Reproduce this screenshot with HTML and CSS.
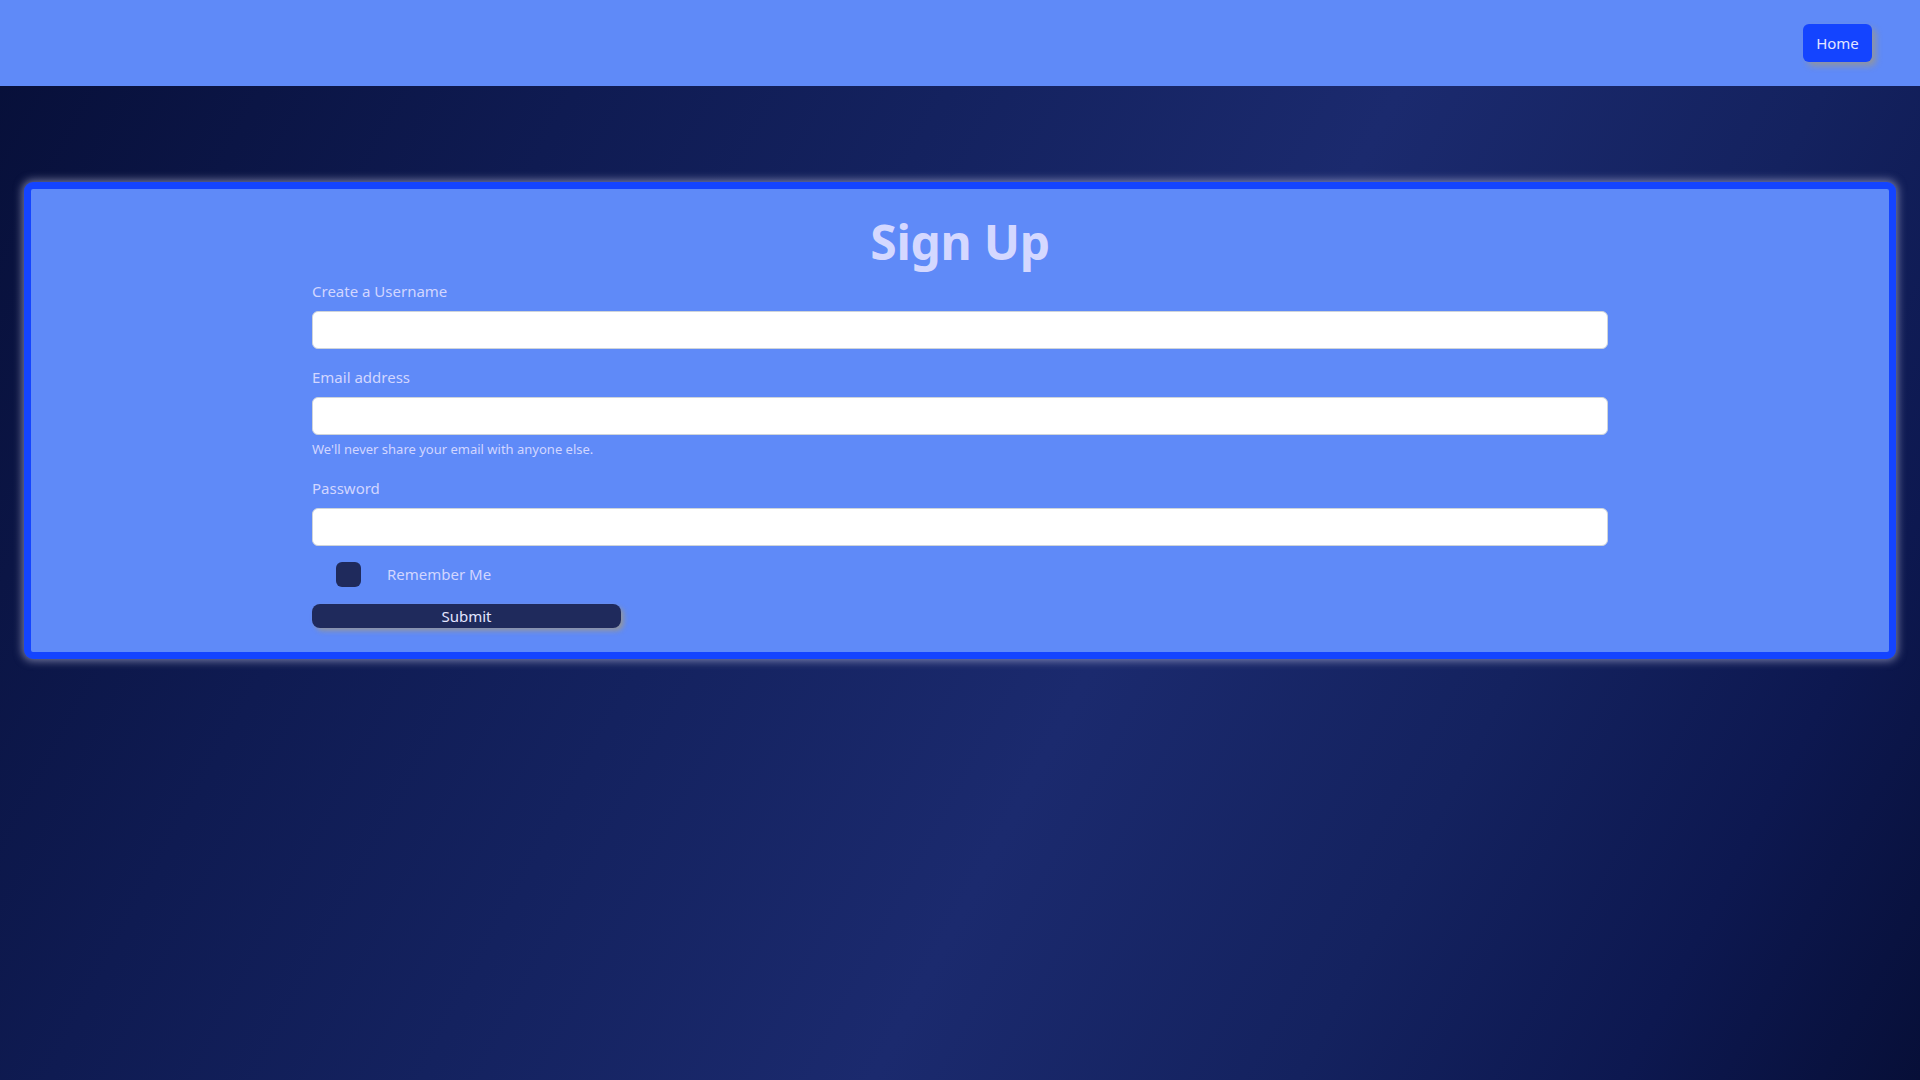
FILE: index.html
```html
<!DOCTYPE html>
<html lang="en">
<head>
<meta charset="utf-8">
<title>Sign Up</title>
<link rel="stylesheet" href="styles.css">
</head>
<body>
<nav class="navbar">
  <a class="home-btn" href="#">Home</a>
</nav>
<main class="page">
  <section class="card">
    <div class="container">
      <h1 class="title">Sign Up</h1>
      <form class="form">
        <div class="field">
          <label class="label" for="username">Create a Username</label>
          <input class="control" type="text" id="username">
        </div>
        <div class="field">
          <label class="label" for="email">Email address</label>
          <input class="control" type="email" id="email">
          <div class="help">We'll never share your email with anyone else.</div>
        </div>
        <div class="field">
          <label class="label" for="password">Password</label>
          <input class="control" type="password" id="password">
        </div>
        <div class="check-row">
          <span class="check-box"></span>
          <span class="check-label">Remember Me</span>
        </div>
        <button class="submit" type="button">Submit</button>
      </form>
    </div>
  </section>
</main>
</body>
</html>
```
FILE: styles.css
```css
* { box-sizing: border-box; }
html, body { height: 100%; }
body {
  margin: 0;
  font-family: "Noto Sans", "Open Sans", sans-serif;
  font-size: 15px;
  line-height: 1.5;
  background: linear-gradient(118deg, #070f38 0%, #0f1b52 25%, #14225f 40%, #1b2a6e 58%, #14225f 75%, #0d1850 88%, #070f38 100%) fixed;
  color: #d2d6ff;
}
.navbar {
  height: 86px;
  background: #5f8af8;
  display: flex;
  justify-content: flex-end;
  align-items: center;
  padding: 0 48px 0 0;
}
.home-btn {
  display: inline-flex;
  align-items: center;
  justify-content: center;
  width: 69px;
  height: 38px;
  background: #1444ff;
  color: #e4e6ff;
  text-decoration: none;
  border-radius: 6px;
  font-size: 15px;
  box-shadow: 4px 4px 6px rgba(150, 150, 150, 0.9);
}
.page {
  padding: 96px 24px 0;
}
.card {
  background: #5f8af8;
  border: 7px solid #1444ff;
  border-radius: 9px;
  box-shadow: 0 0 8px 2px rgba(200, 200, 230, 0.55);
  padding: 23px 0 24px;
}
.container {
  width: 1296px;
  margin: 0 auto;
}
.title {
  margin: 0 0 7px;
  text-align: center;
  font-size: 48px;
  line-height: 60px;
  font-weight: 700;
  color: #d4d8ff;
  letter-spacing: -0.3px;
}
.form { display: flex; flex-direction: column; }
.field { display: flex; flex-direction: column; margin-bottom: 16px; }
.label {
  font-size: 15px;
  line-height: 24px;
  margin-bottom: 8px;
  color: #d2d6ff;
}
.control {
  height: 38px;
  border: 1px solid #ced4da;
  border-radius: 6px;
  background: #ffffff;
  font: inherit;
  padding: 6px 12px;
}
.help {
  margin-top: 4px;
  font-size: 13px;
  line-height: 21px;
  color: #d2d6ff;
}
.check-row {
  display: flex;
  align-items: center;
  gap: 26px;
  padding-left: 24px;
  height: 25px;
  margin-bottom: 17px;
}
.check-box {
  width: 25px;
  height: 25px;
  border-radius: 6px;
  background: #1f2a5c;
}
.check-label {
  font-size: 15px;
  color: #d2d6ff;
}
.submit {
  width: 309px;
  height: 24px;
  border: none;
  border-radius: 8px;
  background: #1f2a5c;
  color: #e4e6ff;
  font: inherit;
  font-size: 15px;
  line-height: 24px;
  padding: 0;
  box-shadow: 3px 3px 5px rgba(150, 150, 150, 0.9);
}
```
